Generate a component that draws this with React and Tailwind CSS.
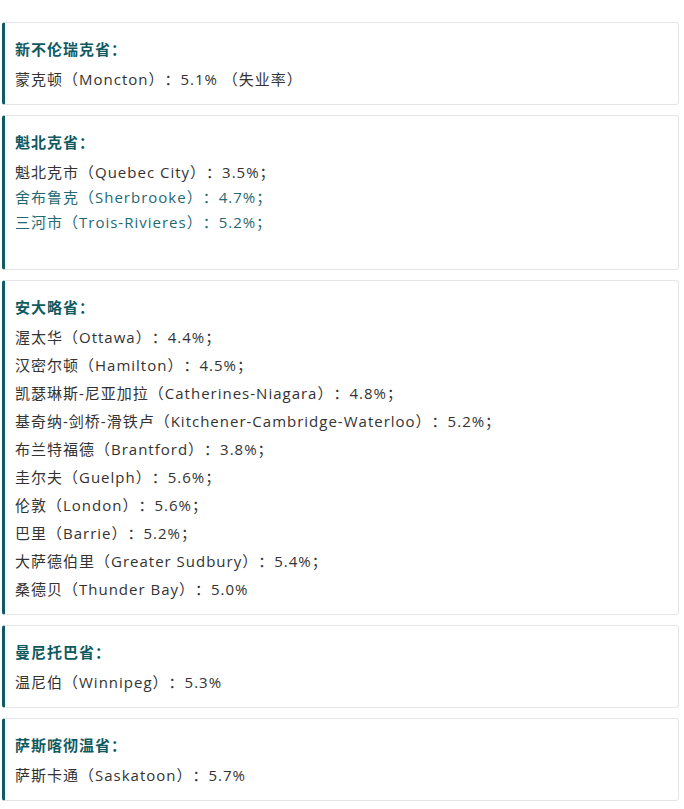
import React from "react";

const provinces = [
	{
		name: "新不伦瑞克省：",
		lines: [{ text: "蒙克顿（Moncton）：5.1% （失业率）" }],
	},
	{
		name: "魁北克省：",
		tight: true,
		lines: [
			{ text: "魁北克市（Quebec City）：3.5%；" },
			{ text: "舍布鲁克（Sherbrooke）：4.7%；", teal: true },
			{ text: "三河市（Trois-Rivieres）：5.2%；", teal: true },
		],
	},
	{
		name: "安大略省：",
		lines: [
			{ text: "渥太华（Ottawa）：4.4%；" },
			{ text: "汉密尔顿（Hamilton）：4.5%；" },
			{ text: "凯瑟琳斯-尼亚加拉（Catherines-Niagara）：4.8%；" },
			{ text: "基奇纳-剑桥-滑铁卢（Kitchener-Cambridge-Waterloo）：5.2%；" },
			{ text: "布兰特福德（Brantford）：3.8%；" },
			{ text: "圭尔夫（Guelph）：5.6%；" },
			{ text: "伦敦（London）：5.6%；" },
			{ text: "巴里（Barrie）：5.2%；" },
			{ text: "大萨德伯里（Greater Sudbury）：5.4%；" },
			{ text: "桑德贝（Thunder Bay）：5.0%" },
		],
	},
	{
		name: "曼尼托巴省：",
		lines: [{ text: "温尼伯（Winnipeg）：5.3%" }],
	},
	{
		name: "萨斯喀彻温省：",
		lines: [{ text: "萨斯卡通（Saskatoon）：5.7%" }],
	},
];

const ProvinceCard = ({ province }) => (
	<section className="rounded-[3px] border border-[#e6e6e6] border-l-[3px] border-l-[#0d5c61] bg-white pt-[12px] pb-[11px] pl-[10px] pr-4">
		<h3 className="mb-[2px] text-[15px] font-bold leading-[28px] tracking-[1px] text-[#0f5a5f]">
			{province.name}
		</h3>
		<div className={province.tight ? "pt-[2px] pb-[23px]" : ""}>
			{province.lines.map((line) => (
				<p
					key={line.text}
					className={`text-[15px] tracking-[1px] ${province.tight ? "leading-[25px]" : "leading-[28px]"} ${line.teal ? "text-[#1f6a72]" : "text-[#333333]"}`}
				>
					{line.text}
				</p>
			))}
		</div>
	</section>
);

export default function App() {
	return (
		<div
			className="flex flex-col gap-[10px] bg-white pt-[22px] pb-[9px] pl-[2px] pr-[5px] [text-spacing-trim:space-all]"
			style={{ fontFamily: '"Open Sans", "Noto Sans CJK SC", sans-serif' }}
		>
			{provinces.map((p) => (
				<ProvinceCard key={p.name} province={p} />
			))}
		</div>
	);
}
